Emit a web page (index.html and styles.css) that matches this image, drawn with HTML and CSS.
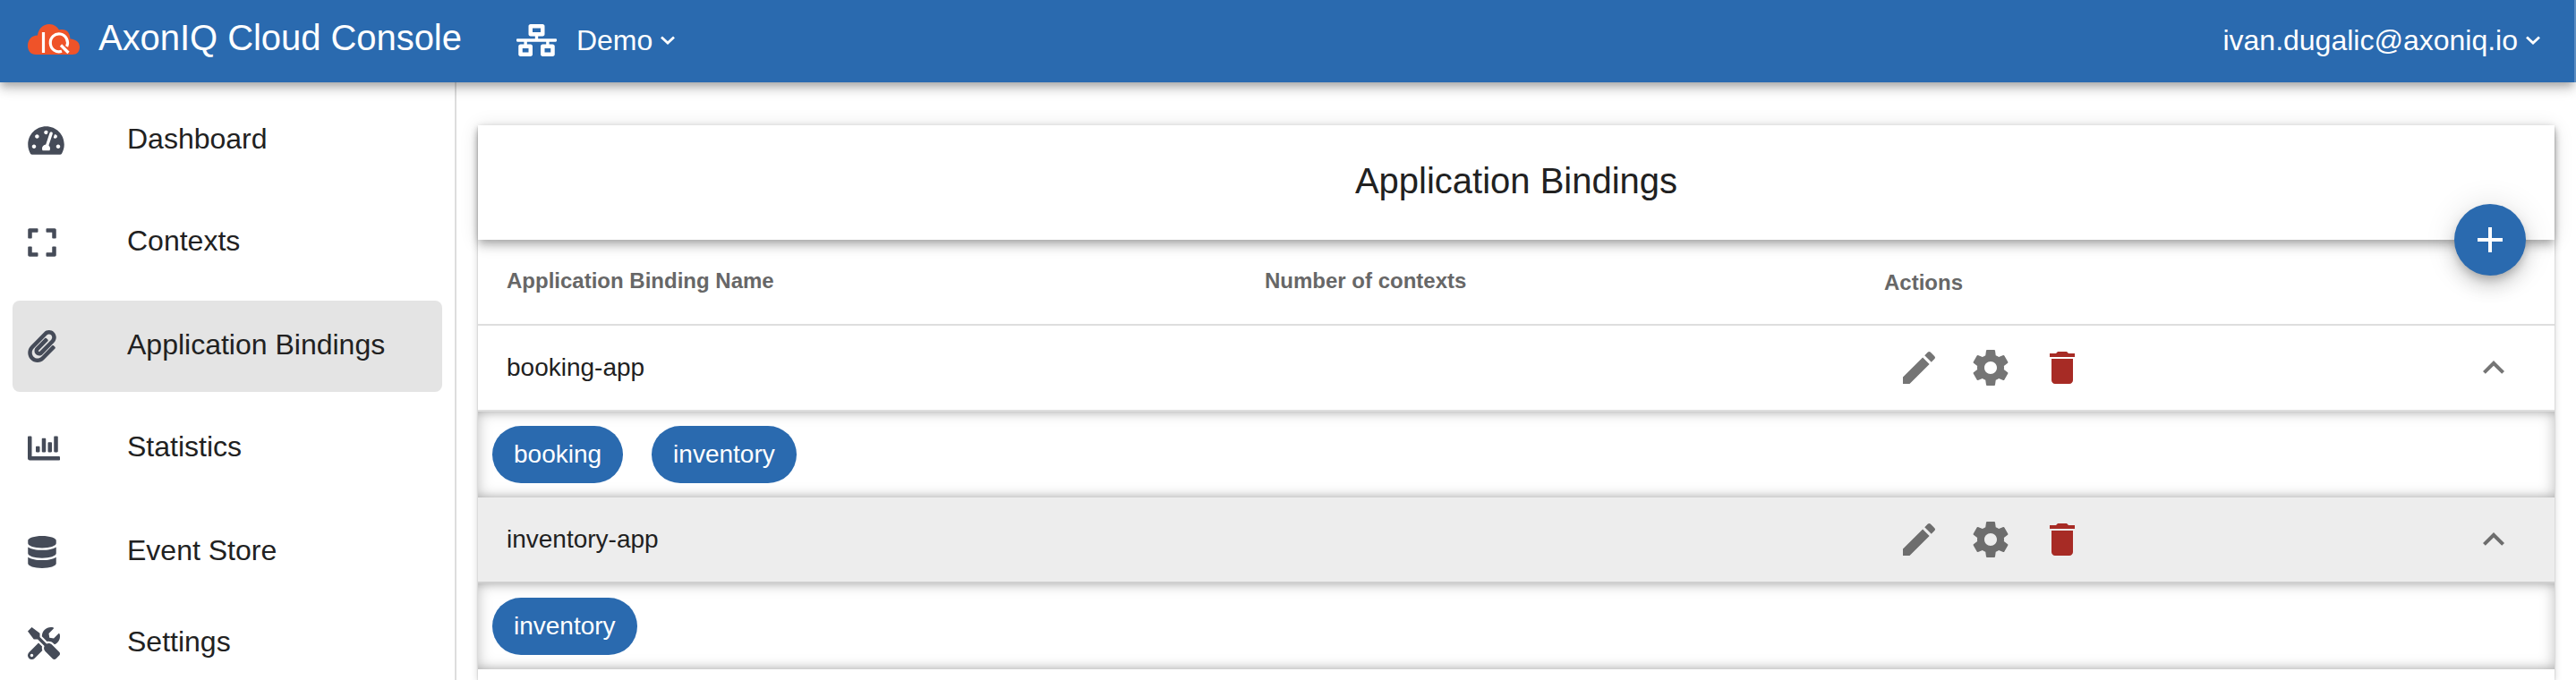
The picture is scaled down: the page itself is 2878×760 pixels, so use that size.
FILE: index.html
```html
<!DOCTYPE html>
<html lang="en">
<head>
<meta charset="utf-8">
<title>AxonIQ Cloud Console</title>
<link rel="stylesheet" href="styles.css">
</head>
<body>
<svg class="sprite" aria-hidden="true">
  <symbol id="edit" viewBox="0 0 24 24"><path d="M3 17.25V21h3.75L17.81 9.94l-3.75-3.75L3 17.25zM20.71 7.04a1 1 0 0 0 0-1.41l-2.34-2.34a1 1 0 0 0-1.41 0l-1.83 1.83 3.75 3.75 1.83-1.83z"/></symbol>
  <symbol id="gear" viewBox="0 0 24 24"><path d="M19.43 12.98c.04-.32.07-.64.07-.98s-.03-.66-.07-.98l2.11-1.65c.19-.15.24-.42.12-.64l-2-3.46c-.12-.22-.39-.3-.61-.22l-2.49 1c-.52-.4-1.08-.73-1.69-.98l-.38-2.65C14.46 2.18 14.25 2 14 2h-4c-.25 0-.46.18-.49.42l-.38 2.65c-.61.25-1.17.59-1.69.98l-2.49-1c-.23-.09-.49 0-.61.22l-2 3.46c-.13.22-.07.49.12.64l2.11 1.65c-.04.32-.07.65-.07.98s.03.66.07.98l-2.11 1.65c-.19.15-.24.42-.12.64l2 3.46c.12.22.39.3.61.22l2.49-1c.52.4 1.08.73 1.69.98l.38 2.65c.03.24.24.42.49.42h4c.25 0 .46-.18.49-.42l.38-2.65c.61-.25 1.17-.59 1.69-.98l2.49 1c.23.09.49 0 .61-.22l2-3.46c.12-.22.07-.49-.12-.64l-2.11-1.65zM12 15.5c-1.93 0-3.5-1.57-3.5-3.5s1.57-3.5 3.5-3.5 3.5 1.57 3.5 3.5-1.57 3.5-3.5 3.5z"/></symbol>
  <symbol id="trash" viewBox="0 0 24 24"><path d="M6 19c0 1.1.9 2 2 2h8c1.100 0 2-.9 2-2V7H6v12zM19 4h-3.500l-1-1h-5l-1 1H5v2h14V4z"/></symbol>
  <symbol id="up" viewBox="0 0 24 24"><path d="M12 8l-6 6 1.410 1.410L12 10.830l4.590 4.580L18 14z"/></symbol>
</svg>
<header class="topbar">
  <svg class="logo" viewBox="0 0 58 34"><path fill="#ef5329" d="M9 34C3.500 34 0 30 0 24c0-6 4-11.500 11-11.500C12 5 17 0 24 0c5.500 0 9 3 11 6.500 1-.4 2-.5 3.500-.5C44 6 47 10 47.500 16.500 54 17 58 20.500 58 25.500c0 5-3 8.500-8 8.500z"/><path fill="none" stroke="#fff" stroke-width="3.200" d="M17.500 9v23M37 23.500l8.500 8.500"/><path fill="none" stroke="#fff" stroke-width="3.200" d="M38 30.300A9.600 10 0 1 1 43.600 25"/></svg>
  <h1 class="brand">AxonIQ Cloud Console</h1>
  <svg class="network" viewBox="0 0 640 512"><path d="M640 264v-16c0-8.840-7.160-16-16-16H344v-40h72c17.670 0 32-14.330 32-32V32c0-17.670-14.330-32-32-32H224c-17.670 0-32 14.330-32 32v128c0 17.670 14.330 32 32 32h72v40H16c-8.840 0-16 7.160-16 16v16c0 8.840 7.160 16 16 16h104v40H64c-17.670 0-32 14.330-32 32v128c0 17.670 14.330 32 32 32h160c17.670 0 32-14.330 32-32V352c0-17.670-14.330-32-32-32h-56v-40h304v40h-56c-17.670 0-32 14.330-32 32v128c0 17.670 14.330 32 32 32h160c17.670 0 32-14.330 32-32V352c0-17.670-14.330-32-32-32h-56v-40h104c8.840 0 16-7.160 16-16zM256 128V64h128v64H256zm-64 320H96v-64h96v64zm352 0h-96v-64h96v64z"/></svg>
  <span class="menu">Demo<svg class="caret" viewBox="0 0 16 10"><path d="M1 1.500l7 6.500 7-6.500"/></svg></span>
  <span class="menu account">ivan.dugalic@axoniq.io<svg class="caret" viewBox="0 0 16 10"><path d="M1 1.500l7 6.500 7-6.500"/></svg></span>
</header>
<div class="layout">
  <nav class="sidebar">
    <a class="item"><svg class="icon wide" viewBox="0 0 576 512"><path d="M288 32C128.940 32 0 160.940 0 320c0 52.800 14.250 102.260 39.060 144.800 5.610 9.620 16.300 15.200 27.440 15.200h443c11.140 0 21.830-5.580 27.440-15.200C561.750 422.260 576 372.800 576 320c0-159.060-128.940-288-288-288zm0 64c14.710 0 26.580 10.130 30.320 23.650-1.110 2.260-2.640 4.230-3.450 6.670l-9.220 27.670c-5.130 3.490-10.970 6.010-17.640 6.010-17.670 0-32-14.330-32-32S270.330 96 288 96zM96 384c-17.670 0-32-14.330-32-32s14.330-32 32-32 32 14.330 32 32-14.330 32-32 32zm48-160c-17.670 0-32-14.330-32-32s14.330-32 32-32 32 14.330 32 32-14.330 32-32 32zm246.770-72.410l-61.330 184C343.130 347.330 352 364.540 352 384c0 11.720-3.380 22.550-8.880 32H232.880c-5.500-9.450-8.880-20.280-8.880-32 0-33.940 26.500-61.430 59.900-63.590l61.340-184.010c4.170-12.560 17.730-19.450 30.360-15.170 12.570 4.190 19.350 17.790 15.170 30.360zm14.660 57.200l15.520-46.550c3.470-1.290 7.130-2.230 11.050-2.230 17.670 0 32 14.330 32 32s-14.330 32-32 32c-11.380-.01-20.890-6.280-26.570-15.220zM480 384c-17.670 0-32-14.330-32-32s14.330-32 32-32 32 14.330 32 32-14.330 32-32 32z"/></svg><span class="label">Dashboard</span></a>
    <a class="item gap-s"><svg class="icon narrow" viewBox="0 0 448 512"><path d="M0 180V56c0-13.300 10.700-24 24-24h124c6.600 0 12 5.400 12 12v40c0 6.600-5.400 12-12 12H64v84c0 6.600-5.400 12-12 12H12c-6.600 0-12-5.400-12-12zM288 44v40c0 6.600 5.400 12 12 12h84v84c0 6.600 5.400 12 12 12h40c6.600 0 12-5.400 12-12V56c0-13.300-10.700-24-24-24H300c-6.600 0-12 5.400-12 12zm148 276h-40c-6.600 0-12 5.400-12 12v84h-84c-6.600 0-12 5.400-12 12v40c0 6.600 5.400 12 12 12h124c13.300 0 24-10.700 24-24V332c0-6.600-5.400-12-12-12zM160 468v-40c0-6.600-5.400-12-12-12H64v-84c0-6.600-5.400-12-12-12H12c-6.600 0-12 5.400-12 12v124c0 13.300 10.700 24 24 24h124c6.600 0 12-5.400 12-12z"/></svg><span class="label">Contexts</span></a>
    <a class="item gap-m selected"><svg class="icon narrow" viewBox="0 0 448 512"><path d="M43.246 466.142c-58.430-60.289-57.341-157.511 1.386-217.581L254.392 34c44.316-45.332 116.351-45.336 160.671 0 43.890 44.894 43.943 117.329 0 162.276L232.214 383.128c-29.855 30.537-78.633 30.111-107.982-.998-28.275-29.970-27.368-77.473 1.452-106.953l143.743-146.835c6.182-6.314 16.312-6.422 22.626-.241l22.861 22.379c6.315 6.182 6.422 16.312.241 22.626L171.427 319.927c-4.932 5.045-5.236 13.428-.648 18.292 4.372 4.634 11.245 4.711 15.688.165l182.849-186.851c19.613-20.062 19.613-52.725-.011-72.798-19.189-19.627-49.957-19.637-69.154 0L90.390 293.295c-34.763 35.560-35.299 93.120-1.191 128.313 34.010 35.093 88.985 35.137 123.058.286l172.060-175.999c6.177-6.319 16.307-6.433 22.626-.256l22.877 22.364c6.319 6.177 6.434 16.307.256 22.626l-172.060 175.998c-59.576 60.938-155.943 60.216-214.770-.485z"/></svg><span class="label">Application Bindings</span></a>
    <a class="item gap-s"><svg class="icon" viewBox="0 0 512 512"><path d="M332.800 320h38.400c6.400 0 12.800-6.400 12.800-12.800V172.800c0-6.400-6.400-12.800-12.800-12.800h-38.400c-6.400 0-12.800 6.400-12.800 12.800v134.400c0 6.400 6.400 12.800 12.800 12.800zm96 0h38.400c6.400 0 12.800-6.400 12.800-12.800V76.800c0-6.400-6.400-12.800-12.800-12.800h-38.400c-6.400 0-12.800 6.400-12.800 12.800v230.400c0 6.400 6.400 12.800 12.800 12.800zm-288 0h38.400c6.400 0 12.800-6.400 12.800-12.800v-70.400c0-6.400-6.400-12.800-12.800-12.800h-38.400c-6.400 0-12.800 6.400-12.800 12.800v70.400c0 6.400 6.400 12.800 12.800 12.800zm96 0h38.400c6.400 0 12.800-6.400 12.800-12.800V108.800c0-6.400-6.400-12.800-12.800-12.800h-38.400c-6.400 0-12.800 6.400-12.800 12.800v198.400c0 6.400 6.400 12.800 12.800 12.800zM496 384H64V80c0-8.840-7.160-16-16-16H16C7.160 64 0 71.160 0 80v336c0 17.670 14.330 32 32 32h464c8.840 0 16-7.160 16-16v-32c0-8.840-7.160-16-16-16z"/></svg><span class="label">Statistics</span></a>
    <a class="item gap-m"><svg class="icon narrow" viewBox="0 0 448 512"><path d="M448 73.143v45.714C448 159.143 347.667 192 224 192S0 159.143 0 118.857V73.143C0 32.857 100.333 0 224 0s224 32.857 224 73.143zM448 176v102.857C448 319.143 347.667 352 224 352S0 319.143 0 278.857V176c48.125 33.143 136.208 48.572 224 48.572S399.874 209.143 448 176zm0 160v102.857C448 479.143 347.667 512 224 512S0 479.143 0 438.857V336c48.125 33.143 136.208 48.572 224 48.572S399.874 369.143 448 336z"/></svg><span class="label">Event Store</span></a>
    <a class="item"><svg class="icon" viewBox="0 0 512 512"><path d="M501.100 395.700L384 278.600c-23.100-23.100-57.600-27.600-85.400-13.900L192 158.100V96L64 0 0 64l96 128h62.100l106.600 106.600c-13.600 27.800-9.200 62.300 13.900 85.400l117.100 117.100c14.600 14.600 38.200 14.600 52.700 0l52.700-52.700c14.500-14.600 14.500-38.200 0-52.700zM331.700 225c28.300 0 54.900 11 74.900 31l19.400 19.400c15.800-6.900 30.800-16.500 43.800-29.500 37.100-37.100 49.700-89.300 37.900-136.700-2.200-9-13.500-12.100-20.100-5.500l-74.400 74.400-67.900-11.300L334 98.900l74.400-74.400c6.600-6.600 3.400-17.900-5.700-20.200-47.400-11.700-99.600.9-136.600 37.900-28.500 28.500-41.900 66.100-41.200 103.600l82.100 82.100c8.100-1.900 16.500-2.900 24.700-2.900zm-103.900 82l-56.700-56.700L18.700 402.800c-25 25-25 65.500 0 90.500s65.500 25 90.500 0l123.600-123.600c-7.600-19.900-9.900-41.600-5-62.700zM64 472c-13.200 0-24-10.800-24-24 0-13.300 10.700-24 24-24s24 10.700 24 24c0 13.200-10.700 24-24 24z"/></svg><span class="label">Settings</span></a>
  </nav>
  <main class="content">
    <section class="card">
      <div class="card-head">
        <h2 class="title">Application Bindings</h2>
        <button class="fab" aria-label="Add"><svg class="plus" viewBox="0 0 24 24"><path d="M19 13h-6v6h-2v-6H5v-2h6V5h2v6h6v2z"/></svg></button>
      </div>
      <div class="row head"><span>Application Binding Name</span><span>Number of contexts</span><span class="lower">Actions</span></div>
      <div class="row"><span>booking-app</span><span></span><span class="actions"><svg class="act"><use href="#edit"/></svg><svg class="act"><use href="#gear"/></svg><svg class="act danger"><use href="#trash"/></svg></span><svg class="act toggle"><use href="#up"/></svg></div>
      <div class="detail"><span class="chip">booking</span><span class="chip">inventory</span></div>
      <div class="row hover"><span>inventory-app</span><span></span><span class="actions"><svg class="act"><use href="#edit"/></svg><svg class="act"><use href="#gear"/></svg><svg class="act danger"><use href="#trash"/></svg></span><svg class="act toggle"><use href="#up"/></svg></div>
      <div class="detail"><span class="chip">inventory</span></div>
    </section>
  </main>
</div>
</body>
</html>
```
FILE: styles.css
```css
* { box-sizing: border-box; }
html { height: 100%; overflow: hidden; }
body {
  margin: 0;
  height: 760px;
  overflow: hidden;
  display: flex;
  flex-direction: column;
  background: #fff;
  color: #212121;
  font-family: "Liberation Sans", Arial, Helvetica, sans-serif;
}
.sprite { display: none; }
.topbar {
  position: relative;
  z-index: 2;
  flex: none;
  display: flex;
  align-items: center;
  width: 2876px;
  height: 92px;
  padding: 0 38px 0 31px;
  background: #2a6aaf;
  color: #fff;
  box-shadow: 2px 0 0 #5b8cc1, 0 4px 8px -2px rgba(0,0,0,.2), 0 8px 10px rgba(0,0,0,.14), 0 2px 20px rgba(0,0,0,.12);
}
.logo { width: 58px; height: 34px; margin: 0 21px 4px 0; }
.brand { margin: 0 61px 8px 0; font-size: 40px; font-weight: 400; line-height: 48px; letter-spacing: -.05px; white-space: nowrap; }
.network { width: 45px; height: 36px; margin: 0 22px 3px 0; fill: #fff; }
.menu { display: flex; align-items: center; font-size: 32px; line-height: 40px; padding-bottom: 3px; }
.account { margin-left: auto; }
.caret { width: 16px; height: 10px; margin-left: 9px; fill: none; stroke: #fff; stroke-width: 2.8; }
.layout { flex: 1; display: flex; min-height: 0; overflow: hidden; }
.sidebar {
  flex: none;
  width: 510px;
  height: 668px;
  overflow: hidden;
  padding: 14px 14px 0;
  border-right: 2px solid #ddd;
}
.item {
  display: flex;
  align-items: center;
  height: 102px;
  padding-left: 17px;
  border-radius: 8px;
}
.item:last-child { height: 92px; padding-top: 10px; }
.gap-s { margin-top: 12px; }
.gap-m { margin-top: 14px; }
.selected { background: #e4e4e4; }
.icon { width: 36px; height: 36px; margin-right: 75px; fill: #454b58; }
.icon.wide { width: 41px; margin-right: 70px; }
.icon.narrow { width: 32px; margin-right: 79px; }
.label { font-size: 32px; line-height: 40px; padding-bottom: 4px; white-space: nowrap; }
.content { flex: 1; height: 668px; padding: 48px 24px 0; }
.card {
  height: 620px;
  box-shadow: 0 4px 2px -2px rgba(0,0,0,.2), 0 2px 2px rgba(0,0,0,.2), 0 2px 8px rgba(0,0,0,.18);
}
.card-head {
  position: relative;
  display: flex;
  align-items: center;
  justify-content: center;
  height: 128px;
  background: #fff;
  box-shadow: 0 4px 8px -2px rgba(0,0,0,.2), 0 8px 10px rgba(0,0,0,.14), 0 2px 20px rgba(0,0,0,.12);
}
.title { margin: 0; padding-bottom: 4px; font-size: 40px; font-weight: 400; line-height: 48px; }
.fab {
  position: absolute;
  right: 32px;
  bottom: -40px;
  display: flex;
  align-items: center;
  justify-content: center;
  width: 80px;
  height: 80px;
  padding: 0;
  border: 0;
  border-radius: 50%;
  background: #2a6aaf;
  box-shadow: 0 6px 10px -2px rgba(0,0,0,.2), 0 12px 20px rgba(0,0,0,.14), 0 2px 36px rgba(0,0,0,.12);
}
.plus { width: 48px; height: 48px; fill: #fff; }
.row {
  display: grid;
  grid-template-columns: 847px 692px 1fr 48px;
  align-items: center;
  height: 96px;
  padding: 0 44px 0 32px;
  border-bottom: 2px solid #dedede;
  font-size: 28px;
  line-height: 34px;
}
.head { color: #676767; font-size: 24px; font-weight: 700; padding-bottom: 3px; }
.lower { padding-top: 4px; }
.hover { background: #ededed; border-color: #cfcfcf; }
.actions { display: flex; gap: 32px; padding-left: 15px; }
.act { width: 48px; height: 48px; fill: #757575; }
.hover .act { fill: #6d6d6d; }
.act.danger, .hover .act.danger { fill: #a72b25; }
.detail {
  display: flex;
  align-items: center;
  gap: 32px;
  height: 96px;
  padding: 0 16px;
  box-shadow: inset 0 8px 8px -8px rgba(0,0,0,.16), inset 0 -8px 8px -8px rgba(0,0,0,.16), inset 0 0 16px rgba(0,0,0,.26);
}
.chip {
  height: 64px;
  padding: 0 24px;
  border-radius: 32px;
  background: #2a6aaf;
  color: #fff;
  font-size: 28px;
  line-height: 64px;
}
```
